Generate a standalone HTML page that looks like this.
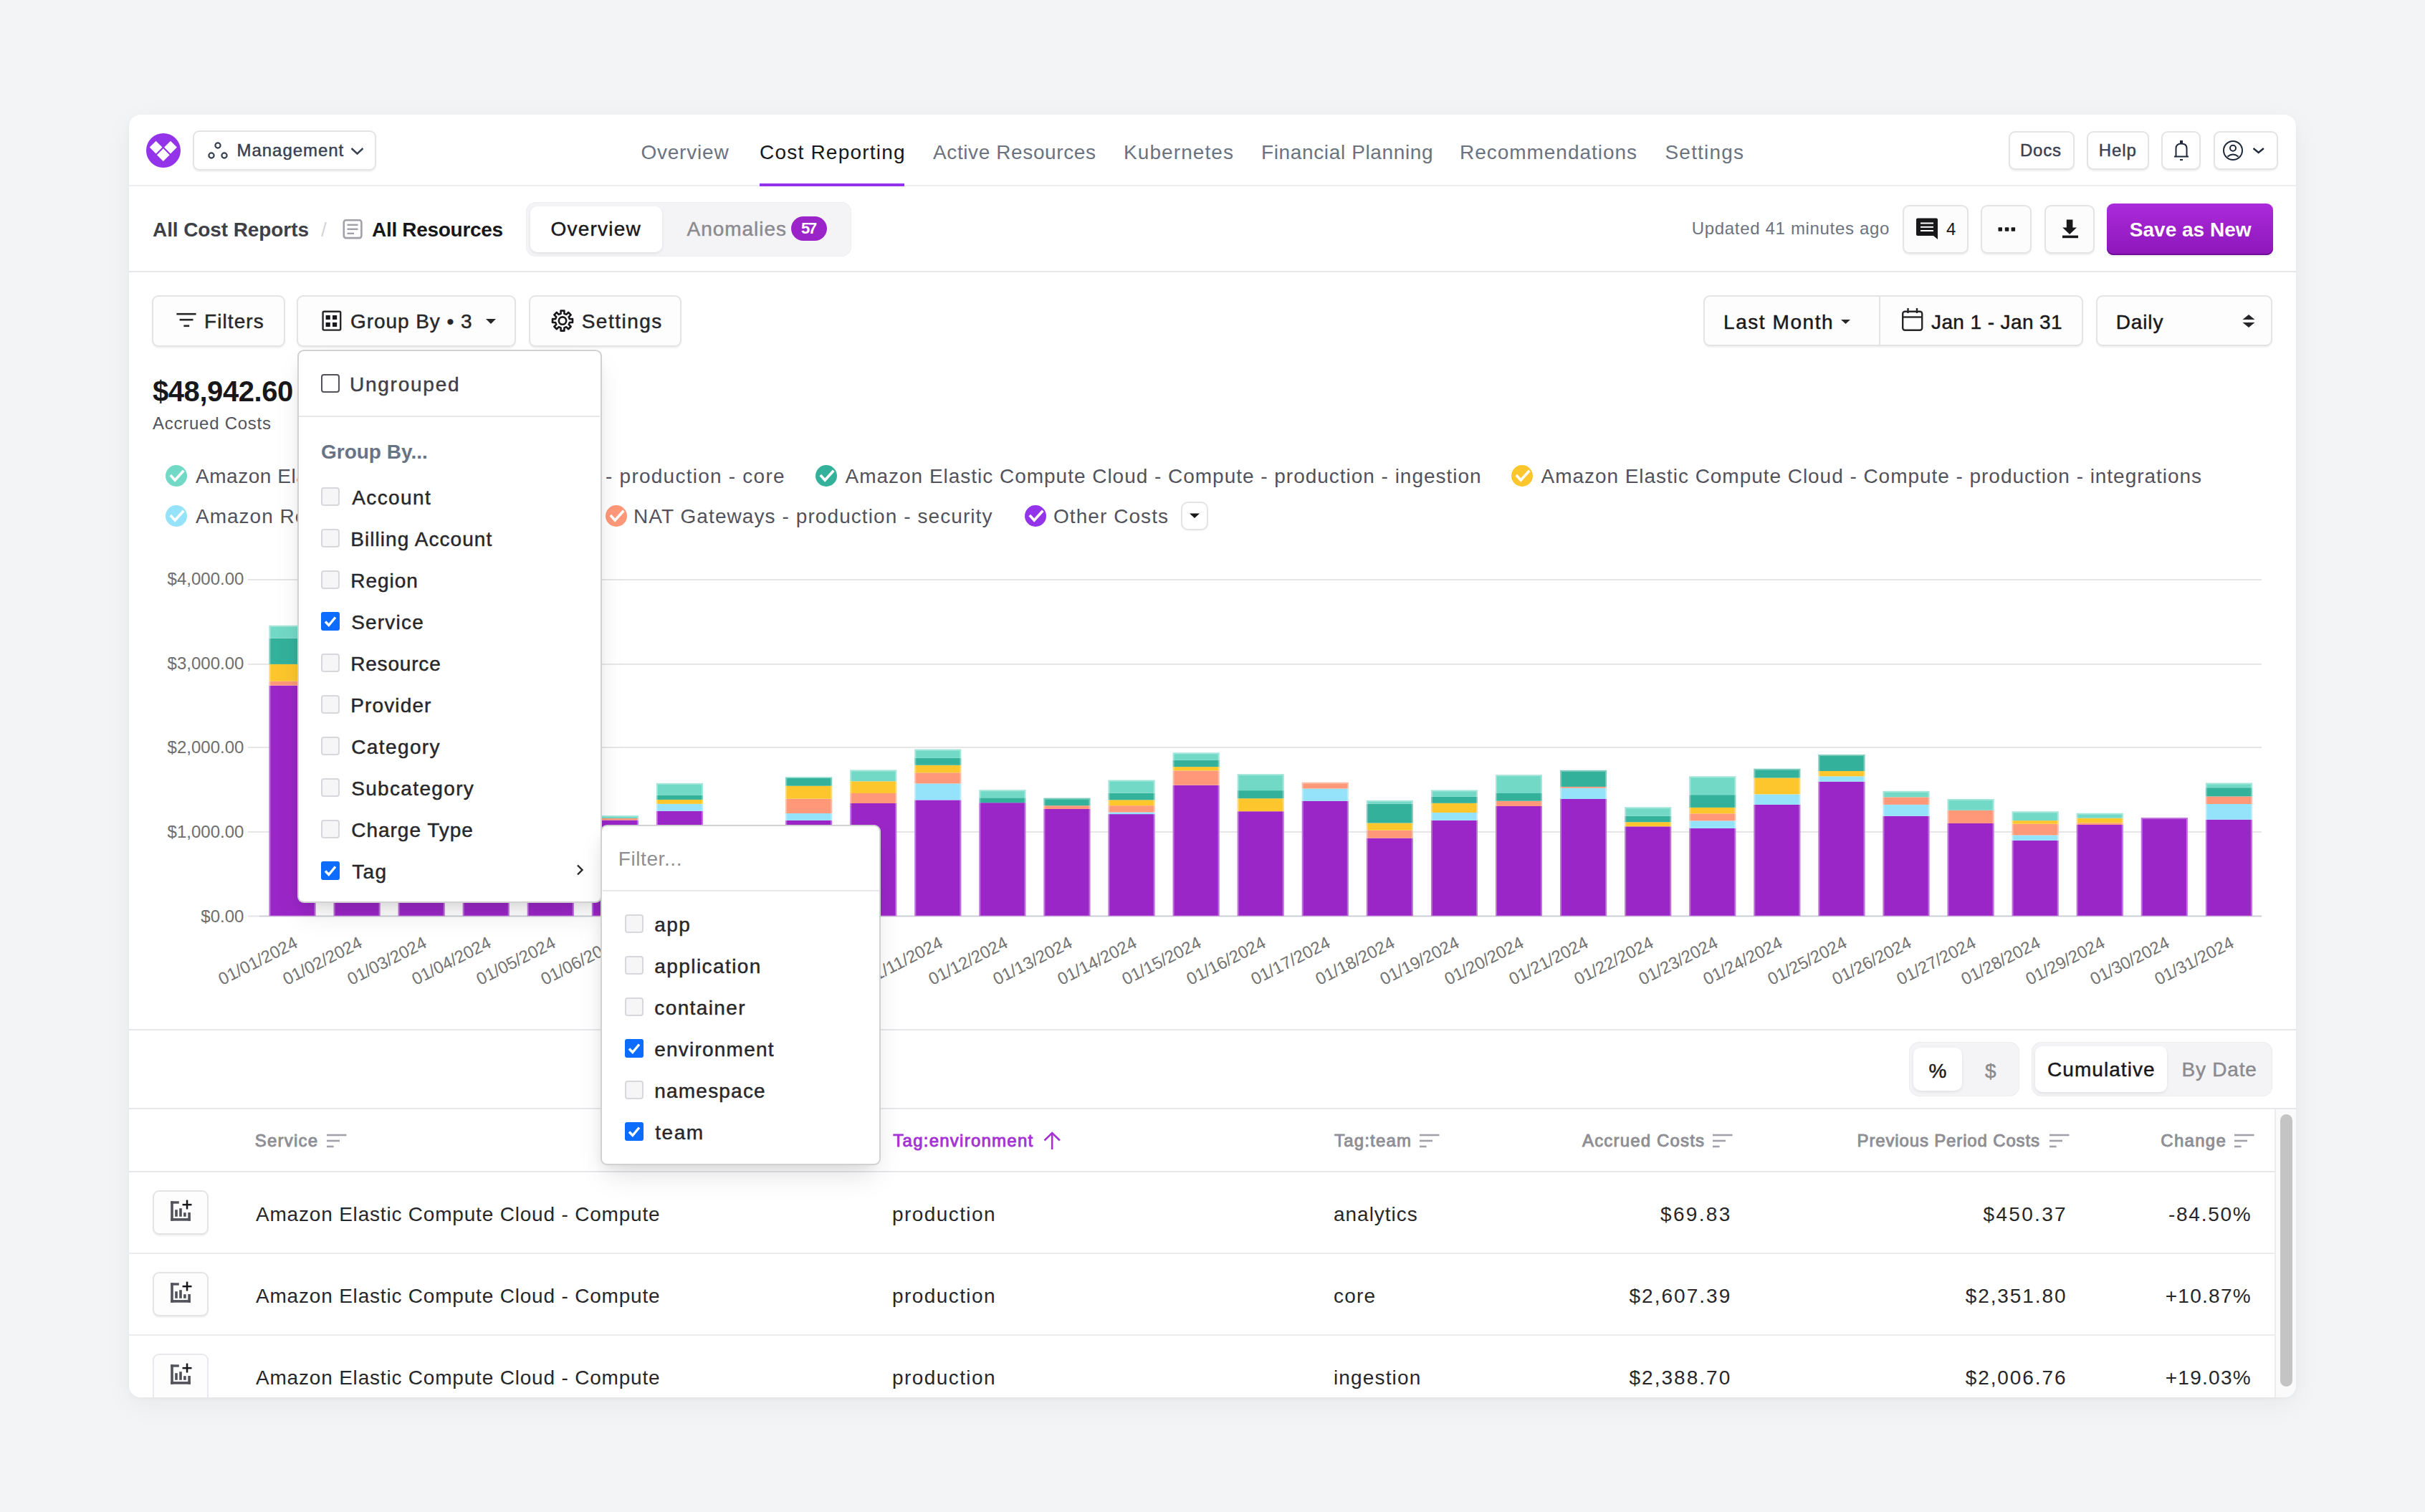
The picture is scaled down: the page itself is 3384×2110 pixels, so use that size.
<!DOCTYPE html>
<html><head><meta charset="utf-8"><title>Cost Reporting</title>
<style>
html,body{margin:0;padding:0;}
html{background:#f3f4f6;}
body{width:3384px;height:2110px;position:relative;background:#f3f4f6;font-family:'Liberation Sans', sans-serif;}

</style></head><body>
<div style="position:absolute;left:180.00px;top:160.00px;width:3024.00px;height:1790.00px;background:#fff;border-radius:16px;box-shadow:0 10px 40px rgba(0,0,0,0.05), 0 2px 6px rgba(0,0,0,0.03);"></div>
<div style="position:absolute;left:180.00px;top:258.00px;width:3024.00px;height:2.00px;background:#eceef1;"></div>
<svg style="position:absolute;left:200.00px;top:182.00px;overflow:visible;" width="56" height="56" viewBox="200 182 56 56"><circle cx="228" cy="210" r="24" fill="#9333ea"/><path d="M217.6 196.7 L226.5 205.6 L217.6 214.5 L208.7 205.6Z M238.0 196.7 L246.9 205.6 L238.0 214.5 L229.1 205.6Z M227.8 207.29999999999998 L236.70000000000002 216.2 L227.8 225.1 L218.9 216.2Z " fill="#fff"/></svg>
<div style="position:absolute;left:269.00px;top:182.00px;width:256.00px;height:56.00px;box-sizing:border-box;border:2px solid #e4e4e7;border-radius:9px;background:#fff;box-shadow:0 2px 2px rgba(24,24,27,0.06);"></div>
<svg style="position:absolute;left:285.00px;top:195.00px;overflow:visible;" width="40" height="30" viewBox="285 195 40 30"><g fill="none" stroke="#374151" stroke-width="2.2"><circle cx="304" cy="203" r="3.6"/><circle cx="295" cy="217" r="3.6"/><circle cx="313" cy="217" r="3.6"/></g></svg>
<div style="position:absolute;left:330.50px;top:197.60px;font:400 24px/24px 'Liberation Sans', sans-serif;-webkit-text-stroke:0.45px #374151;color:#374151;white-space:nowrap;letter-spacing:0.965px;">Management</div>
<svg style="position:absolute;left:486.00px;top:202.00px;overflow:visible;" width="26" height="18" viewBox="486 202 26 18"><polyline points="490.5,207 498.5,214.5 506.5,207" fill="none" stroke="#374151" stroke-width="2.4"/></svg>
<div style="position:absolute;left:894.40px;top:199.00px;font:400 28px/28px 'Liberation Sans', sans-serif;color:#6b7280;white-space:nowrap;letter-spacing:0.790px;">Overview</div>
<div style="position:absolute;left:1060.00px;top:199.00px;font:400 28px/28px 'Liberation Sans', sans-serif;color:#18181b;white-space:nowrap;letter-spacing:1.216px;">Cost Reporting</div>
<div style="position:absolute;left:1302.00px;top:199.00px;font:400 28px/28px 'Liberation Sans', sans-serif;color:#6b7280;white-space:nowrap;letter-spacing:0.609px;">Active Resources</div>
<div style="position:absolute;left:1568.00px;top:199.00px;font:400 28px/28px 'Liberation Sans', sans-serif;color:#6b7280;white-space:nowrap;letter-spacing:1.087px;">Kubernetes</div>
<div style="position:absolute;left:1760.00px;top:199.00px;font:400 28px/28px 'Liberation Sans', sans-serif;color:#6b7280;white-space:nowrap;letter-spacing:0.633px;">Financial Planning</div>
<div style="position:absolute;left:2037.00px;top:199.00px;font:400 28px/28px 'Liberation Sans', sans-serif;color:#6b7280;white-space:nowrap;letter-spacing:0.968px;">Recommendations</div>
<div style="position:absolute;left:2323.50px;top:199.00px;font:400 28px/28px 'Liberation Sans', sans-serif;color:#6b7280;white-space:nowrap;letter-spacing:1.190px;">Settings</div>
<div style="position:absolute;left:1060.00px;top:256.00px;width:202.00px;height:4.00px;background:#9333ea;"></div>
<div style="position:absolute;left:2803.00px;top:183.00px;width:92.00px;height:54.00px;box-sizing:border-box;border:2px solid #e4e4e7;border-radius:9px;background:#fff;box-shadow:0 2px 2px rgba(24,24,27,0.06);"></div>
<div style="position:absolute;left:2819.00px;top:198.00px;font:400 24px/24px 'Liberation Sans', sans-serif;-webkit-text-stroke:0.45px #374151;color:#374151;white-space:nowrap;letter-spacing:0.773px;">Docs</div>
<div style="position:absolute;left:2912.00px;top:183.00px;width:87.00px;height:54.00px;box-sizing:border-box;border:2px solid #e4e4e7;border-radius:9px;background:#fff;box-shadow:0 2px 2px rgba(24,24,27,0.06);"></div>
<div style="position:absolute;left:2928.70px;top:198.00px;font:400 24px/24px 'Liberation Sans', sans-serif;-webkit-text-stroke:0.45px #374151;color:#374151;white-space:nowrap;letter-spacing:0.929px;">Help</div>
<div style="position:absolute;left:3016.00px;top:183.00px;width:55.00px;height:54.00px;box-sizing:border-box;border:2px solid #e4e4e7;border-radius:9px;background:#fff;box-shadow:0 2px 2px rgba(24,24,27,0.06);"></div>
<svg style="position:absolute;left:3030.00px;top:192.00px;overflow:visible;" width="28" height="36" viewBox="3030 192 28 36"><g fill="none" stroke="#1e293b" stroke-width="2"><path d="M3036.5 218 V207 Q3036.5 200.5 3044 200.5 Q3051.5 200.5 3051.5 207 V218"/><line x1="3034" y1="218.5" x2="3054" y2="218.5"/></g><rect x="3042" y="196" width="4" height="4.5" fill="#1e293b"/><rect x="3042" y="222" width="4" height="2" fill="#1e293b"/></svg>
<div style="position:absolute;left:3089.00px;top:183.00px;width:90.00px;height:54.00px;box-sizing:border-box;border:2px solid #e4e4e7;border-radius:9px;background:#fff;box-shadow:0 2px 2px rgba(24,24,27,0.06);"></div>
<svg style="position:absolute;left:3098.00px;top:192.00px;overflow:visible;" width="70" height="36" viewBox="3098 192 70 36"><g fill="none" stroke="#1e293b" stroke-width="2"><circle cx="3116" cy="210" r="13"/><circle cx="3116" cy="206.7" r="4"/><path d="M3108.5 218.5 Q3116 212.5 3123.5 218.5"/><polyline points="3144.5,207 3151.7,213 3158.9,207" stroke-width="2.4"/></g></svg>
<div style="position:absolute;left:180.00px;top:378.00px;width:3024.00px;height:2.00px;background:#e5e7eb;"></div>
<div style="position:absolute;left:213.00px;top:306.50px;font:700 28px/28px 'Liberation Sans', sans-serif;color:#3f3f46;white-space:nowrap;letter-spacing:-0.092px;">All Cost Reports</div>
<div style="position:absolute;left:448.00px;top:306.50px;font:400 28px/28px 'Liberation Sans', sans-serif;color:#d4d4d8;white-space:nowrap;letter-spacing:0.000px;">/</div>
<svg style="position:absolute;left:476.00px;top:304.00px;overflow:visible;" width="32" height="32" viewBox="476 304 32 32"><rect x="479.8" y="307.3" width="24.6" height="24.8" rx="3" fill="none" stroke="#a1a1aa" stroke-width="2.6"/><g stroke="#a1a1aa" stroke-width="2.4"><line x1="484.5" y1="313.8" x2="499.5" y2="313.8"/><line x1="484.5" y1="319.8" x2="499.5" y2="319.8"/><line x1="484.5" y1="325.8" x2="494" y2="325.8"/></g></svg>
<div style="position:absolute;left:519.00px;top:306.50px;font:700 28px/28px 'Liberation Sans', sans-serif;color:#18181b;white-space:nowrap;letter-spacing:-0.306px;">All Resources</div>
<div style="position:absolute;left:734.00px;top:282.00px;width:454.00px;height:76.00px;background:#f4f4f6;border-radius:14px;box-shadow:inset 0 0 0 1px #eeeef1;"></div>
<div style="position:absolute;left:740.00px;top:288.00px;width:184.00px;height:64.00px;background:#fff;border-radius:10px;box-shadow:0 2px 4px rgba(0,0,0,0.08);"></div>
<div style="position:absolute;left:768.50px;top:306.40px;font:400 28px/28px 'Liberation Sans', sans-serif;-webkit-text-stroke:0.45px #18181b;color:#18181b;white-space:nowrap;letter-spacing:1.233px;">Overview</div>
<div style="position:absolute;left:958.50px;top:306.40px;font:400 28px/28px 'Liberation Sans', sans-serif;-webkit-text-stroke:0.45px #8a8a8f;color:#8a8a8f;white-space:nowrap;letter-spacing:0.971px;">Anomalies</div>
<div style="position:absolute;left:1104.00px;top:301.50px;width:50.00px;height:34.00px;background:#9b24c9;border-radius:17px;"></div>
<div style="position:absolute;left:1118.00px;top:308.00px;font:700 22px/22px 'Liberation Sans', sans-serif;color:#fff;white-space:nowrap;letter-spacing:-2.235px;">57</div>
<div style="position:absolute;left:2360.75px;top:307.40px;font:400 24px/24px 'Liberation Sans', sans-serif;color:#6b7280;white-space:nowrap;letter-spacing:0.671px;">Updated 41 minutes ago</div>
<div style="position:absolute;left:2655.00px;top:286.00px;width:92.00px;height:68.00px;box-sizing:border-box;border:2px solid #e4e4e7;border-radius:9px;background:#fcfcfd;box-shadow:0 2px 2px rgba(24,24,27,0.06);"></div>
<svg style="position:absolute;left:2670.00px;top:300.00px;overflow:visible;" width="40" height="40" viewBox="2670 300 40 40"><path d="M2676 304.5 H2702 Q2704 304.5 2704 306.5 V334 L2698 329 H2676 Q2674 329 2674 327 V306.5 Q2674 304.5 2676 304.5Z" fill="#18181b"/><g stroke="#fff" stroke-width="2"><line x1="2680" y1="311.5" x2="2698" y2="311.5"/><line x1="2680" y1="316.8" x2="2698" y2="316.8"/><line x1="2680" y1="322" x2="2698" y2="322"/></g></svg>
<div style="position:absolute;left:2716.00px;top:307.60px;font:400 24px/24px 'Liberation Sans', sans-serif;color:#18181b;white-space:nowrap;letter-spacing:0.000px;">4</div>
<div style="position:absolute;left:2764.00px;top:286.00px;width:71.00px;height:68.00px;box-sizing:border-box;border:2px solid #e4e4e7;border-radius:9px;background:#fcfcfd;box-shadow:0 2px 2px rgba(24,24,27,0.06);"></div>
<svg style="position:absolute;left:2785.00px;top:314.00px;overflow:visible;" width="30" height="12" viewBox="2785 314 30 12"><g fill="#18181b"><rect x="2788.5" y="317.3" width="5.5" height="5.5" rx="1"/><rect x="2797.8" y="317.3" width="5.5" height="5.5" rx="1"/><rect x="2806.6" y="317.3" width="5.5" height="5.5" rx="1"/></g></svg>
<div style="position:absolute;left:2853.00px;top:286.00px;width:70.00px;height:68.00px;box-sizing:border-box;border:2px solid #e4e4e7;border-radius:9px;background:#fcfcfd;box-shadow:0 2px 2px rgba(24,24,27,0.06);"></div>
<svg style="position:absolute;left:2874.00px;top:303.00px;overflow:visible;" width="30" height="32" viewBox="2874 303 30 32"><path d="M2883.8 306.5 H2892.4 V317.5 H2898 L2888.1 327 L2878.2 317.5 H2883.8Z" fill="#18181b"/><rect x="2878" y="328.6" width="22" height="3.6" fill="#18181b"/></svg>
<div style="position:absolute;left:2940.00px;top:284.00px;width:232.00px;height:72.00px;border-radius:9px;background:linear-gradient(#ab2bdb,#8d16b9);box-shadow:inset 0 -2px 0 #6f0e97, 0 2px 3px rgba(0,0,0,0.08);"></div>
<div style="position:absolute;left:2971.80px;top:306.70px;font:700 28px/28px 'Liberation Sans', sans-serif;color:#fff;white-space:nowrap;letter-spacing:0.011px;">Save as New</div>
<div style="position:absolute;left:212.00px;top:412.00px;width:186.00px;height:72.00px;box-sizing:border-box;border:2px solid #e4e4e7;border-radius:9px;background:#fdfdfd;box-shadow:0 2px 2px rgba(24,24,27,0.06);"></div>
<svg style="position:absolute;left:244.00px;top:434.00px;overflow:visible;" width="32" height="24" viewBox="244 434 32 24"><g stroke="#27272a" stroke-width="2.6"><line x1="246.4" y1="438.2" x2="273.6" y2="438.2"/><line x1="250.6" y1="446.2" x2="269.5" y2="446.2"/><line x1="256.4" y1="454.8" x2="264.2" y2="454.8"/></g></svg>
<div style="position:absolute;left:285.00px;top:435.00px;font:400 28px/28px 'Liberation Sans', sans-serif;-webkit-text-stroke:0.45px #27272a;color:#27272a;white-space:nowrap;letter-spacing:1.080px;">Filters</div>
<div style="position:absolute;left:414.00px;top:412.00px;width:306.00px;height:72.00px;box-sizing:border-box;border:2px solid #e4e4e7;border-radius:9px;background:#fdfdfd;box-shadow:0 2px 2px rgba(24,24,27,0.06);"></div>
<svg style="position:absolute;left:446.00px;top:431.00px;overflow:visible;" width="34" height="34" viewBox="446 431 34 34"><rect x="450.6" y="434.8" width="24.6" height="25.8" rx="1.5" fill="none" stroke="#27272a" stroke-width="2.4"/><g fill="#18181b"><rect x="454.6" y="440" width="6.2" height="6"/><rect x="464" y="440" width="6.2" height="6"/><rect x="454.6" y="450" width="6.2" height="6"/><rect x="464" y="450" width="6.2" height="6"/></g></svg>
<div style="position:absolute;left:489.00px;top:435.00px;font:400 28px/28px 'Liberation Sans', sans-serif;-webkit-text-stroke:0.45px #27272a;color:#27272a;white-space:nowrap;letter-spacing:0.942px;">Group By • 3</div>
<svg style="position:absolute;left:674.00px;top:440.00px;overflow:visible;" width="22" height="16" viewBox="674 440 22 16"><path d="M678 445 H692 L685 452Z" fill="#27272a"/></svg>
<div style="position:absolute;left:738.00px;top:412.00px;width:213.00px;height:72.00px;box-sizing:border-box;border:2px solid #e4e4e7;border-radius:9px;background:#fdfdfd;box-shadow:0 2px 2px rgba(24,24,27,0.06);"></div>
<svg style="position:absolute;left:766.00px;top:428.00px;overflow:visible;" width="40" height="40" viewBox="766 428 40 40"><path d="M782.60 437.69 L782.56 433.61 L787.44 433.61 L787.40 437.69 L790.32 438.89 L793.17 435.98 L796.62 439.43 L793.71 442.28 L794.91 445.20 L798.99 445.16 L798.99 450.04 L794.91 450.00 L793.71 452.92 L796.62 455.77 L793.17 459.22 L790.32 456.31 L787.40 457.51 L787.44 461.59 L782.56 461.59 L782.60 457.51 L779.68 456.31 L776.83 459.22 L773.38 455.77 L776.29 452.92 L775.09 450.00 L771.01 450.04 L771.01 445.16 L775.09 445.20 L776.29 442.28 L773.38 439.43 L776.83 435.98 L779.68 438.89Z" fill="none" stroke="#18181b" stroke-width="2.6" stroke-linejoin="round"/><circle cx="785" cy="447.6" r="5.2" fill="none" stroke="#18181b" stroke-width="2.6"/></svg>
<div style="position:absolute;left:811.70px;top:435.00px;font:400 28px/28px 'Liberation Sans', sans-serif;-webkit-text-stroke:0.45px #27272a;color:#27272a;white-space:nowrap;letter-spacing:1.490px;">Settings</div>
<div style="position:absolute;left:2377.00px;top:412.00px;width:530.00px;height:71.00px;box-sizing:border-box;border:2px solid #e4e4e7;border-radius:9px;background:#fdfdfd;box-shadow:0 2px 2px rgba(24,24,27,0.06);"></div>
<div style="position:absolute;left:2622.00px;top:414.00px;width:2.00px;height:67.00px;background:#e4e4e7;"></div>
<div style="position:absolute;left:2405.00px;top:435.50px;font:400 28px/28px 'Liberation Sans', sans-serif;-webkit-text-stroke:0.45px #18181b;color:#18181b;white-space:nowrap;letter-spacing:1.561px;">Last Month</div>
<svg style="position:absolute;left:2565.00px;top:440.00px;overflow:visible;" width="22" height="16" viewBox="2565 440 22 16"><path d="M2569 446 H2582 L2575.5 452Z" fill="#27272a"/></svg>
<svg style="position:absolute;left:2650.00px;top:426.00px;overflow:visible;" width="38" height="40" viewBox="2650 426 38 40"><rect x="2655.2" y="434.8" width="27" height="26" rx="3" fill="none" stroke="#27272a" stroke-width="2.4"/><line x1="2655" y1="442.5" x2="2682.5" y2="442.5" stroke="#27272a" stroke-width="2.4"/><g stroke="#27272a" stroke-width="2.4"><line x1="2662.5" y1="430" x2="2662.5" y2="437"/><line x1="2675" y1="430" x2="2675" y2="437"/></g></svg>
<div style="position:absolute;left:2695.00px;top:435.50px;font:400 28px/28px 'Liberation Sans', sans-serif;-webkit-text-stroke:0.45px #18181b;color:#18181b;white-space:nowrap;letter-spacing:0.394px;">Jan 1 - Jan 31</div>
<div style="position:absolute;left:2925.00px;top:412.00px;width:246.00px;height:71.00px;box-sizing:border-box;border:2px solid #e4e4e7;border-radius:9px;background:#fdfdfd;box-shadow:0 2px 2px rgba(24,24,27,0.06);"></div>
<div style="position:absolute;left:2952.70px;top:435.50px;font:400 28px/28px 'Liberation Sans', sans-serif;-webkit-text-stroke:0.45px #18181b;color:#18181b;white-space:nowrap;letter-spacing:0.891px;">Daily</div>
<svg style="position:absolute;left:3125.00px;top:436.00px;overflow:visible;" width="26" height="24" viewBox="3125 436 26 24"><path d="M3129.5 446 L3138 439 L3146.5 446Z M3129.5 450 L3138 457 L3146.5 450Z" fill="#27272a"/></svg>
<div style="position:absolute;left:213.00px;top:526.40px;font:700 40px/40px 'Liberation Sans', sans-serif;color:#18181b;white-space:nowrap;letter-spacing:-0.439px;">$48,942.60</div>
<div style="position:absolute;left:213.00px;top:579.00px;font:400 24px/24px 'Liberation Sans', sans-serif;color:#52525b;white-space:nowrap;letter-spacing:0.745px;">Accrued Costs</div>
<svg style="position:absolute;left:230.00px;top:648.00px;overflow:visible;" width="32" height="32" viewBox="230 648 32 32"><circle cx="246" cy="664" r="15" fill="#72d9c6"/><polyline points="237.8,663 244.2,670 256.3,656.7" fill="none" stroke="#fff" stroke-width="3.6"/></svg>
<div style="position:absolute;left:273.00px;top:650.70px;font:400 28px/28px 'Liberation Sans', sans-serif;color:#52525b;white-space:nowrap;letter-spacing:0.535px;">Amazon Elastic Compute Cloud - Compute</div>
<div style="position:absolute;left:845.00px;top:650.70px;font:400 28px/28px 'Liberation Sans', sans-serif;color:#52525b;white-space:nowrap;letter-spacing:1.242px;">- production - core</div>
<svg style="position:absolute;left:1137.30px;top:648.00px;overflow:visible;" width="32" height="32" viewBox="1137.3 648 32 32"><circle cx="1153.3" cy="664" r="15" fill="#33b19b"/><polyline points="1145.1,663 1151.5,670 1163.6,656.7" fill="none" stroke="#fff" stroke-width="3.6"/></svg>
<div style="position:absolute;left:1179.60px;top:650.70px;font:400 28px/28px 'Liberation Sans', sans-serif;color:#52525b;white-space:nowrap;letter-spacing:0.977px;">Amazon Elastic Compute Cloud - Compute - production - ingestion</div>
<svg style="position:absolute;left:2108.00px;top:648.00px;overflow:visible;" width="32" height="32" viewBox="2108 648 32 32"><circle cx="2124" cy="664" r="15" fill="#fcc62c"/><polyline points="2115.8,663 2122.2,670 2134.3,656.7" fill="none" stroke="#fff" stroke-width="3.6"/></svg>
<div style="position:absolute;left:2150.50px;top:650.70px;font:400 28px/28px 'Liberation Sans', sans-serif;color:#52525b;white-space:nowrap;letter-spacing:0.960px;">Amazon Elastic Compute Cloud - Compute - production - integrations</div>
<svg style="position:absolute;left:230.00px;top:703.50px;overflow:visible;" width="32" height="32" viewBox="230 703.5 32 32"><circle cx="246" cy="719.5" r="15" fill="#95e3fa"/><polyline points="237.8,718.5 244.2,725.5 256.3,712.2" fill="none" stroke="#fff" stroke-width="3.6"/></svg>
<div style="position:absolute;left:273.00px;top:706.50px;font:400 28px/28px 'Liberation Sans', sans-serif;color:#52525b;white-space:nowrap;letter-spacing:1.000px;">Amazon Redshift - production - data</div>
<svg style="position:absolute;left:843.50px;top:703.50px;overflow:visible;" width="32" height="32" viewBox="843.5 703.5 32 32"><circle cx="859.5" cy="719.5" r="15" fill="#fe9879"/><polyline points="851.3,718.5 857.7,725.5 869.8,712.2" fill="none" stroke="#fff" stroke-width="3.6"/></svg>
<div style="position:absolute;left:884.00px;top:706.50px;font:400 28px/28px 'Liberation Sans', sans-serif;color:#52525b;white-space:nowrap;letter-spacing:1.080px;">NAT Gateways - production - security</div>
<svg style="position:absolute;left:1428.50px;top:703.50px;overflow:visible;" width="32" height="32" viewBox="1428.5 703.5 32 32"><circle cx="1444.5" cy="719.5" r="15" fill="#9333ea"/><polyline points="1436.3,718.5 1442.7,725.5 1454.8,712.2" fill="none" stroke="#fff" stroke-width="3.6"/></svg>
<div style="position:absolute;left:1470.00px;top:706.50px;font:400 28px/28px 'Liberation Sans', sans-serif;color:#52525b;white-space:nowrap;letter-spacing:1.062px;">Other Costs</div>
<div style="position:absolute;left:1648.00px;top:700.00px;width:38.00px;height:40.00px;box-sizing:border-box;border:2px solid #e4e4e7;border-radius:10px;background:#fff;box-shadow:0 1px 2px rgba(0,0,0,0.05);"></div>
<svg style="position:absolute;left:1658.00px;top:712.00px;overflow:visible;" width="20" height="14" viewBox="1658 712 20 14"><path d="M1660 716.5 H1674 L1667 723Z" fill="#18181b"/></svg>
<svg style="position:absolute;left:0;top:0" width="3384" height="2110" viewBox="0 0 3384 2110"><rect x="346" y="808" width="2810" height="2" fill="#e6e6e6"/><rect x="346" y="925.9" width="2810" height="2" fill="#e6e6e6"/><rect x="346" y="1042" width="2810" height="2" fill="#e6e6e6"/><rect x="346" y="1160" width="2810" height="2" fill="#e6e6e6"/><rect x="346" y="1277.5" width="16" height="2" fill="#e6e6e6"/><rect x="362" y="1277.5" width="2794" height="2" fill="#ccd0d6"/><rect x="375.50" y="956.60" width="65" height="321.90" fill="#9b26c8"/><rect x="375.50" y="950.70" width="65" height="5.90" fill="#fe9879"/><rect x="375.50" y="926.90" width="65" height="23.80" fill="#fcc62c"/><rect x="375.50" y="890.70" width="65" height="36.20" fill="#33b19b"/><rect x="375.50" y="872.80" width="65" height="17.90" fill="#72d9c6"/><rect x="376.50" y="873.80" width="63" height="404.70" fill="none" stroke="rgba(255,255,255,0.35)" stroke-width="2"/><rect x="465.58" y="1100.00" width="65" height="178.50" fill="#9b26c8"/><rect x="466.58" y="1101.00" width="63" height="177.50" fill="none" stroke="rgba(255,255,255,0.35)" stroke-width="2"/><rect x="555.66" y="1120.00" width="65" height="158.50" fill="#9b26c8"/><rect x="556.66" y="1121.00" width="63" height="157.50" fill="none" stroke="rgba(255,255,255,0.35)" stroke-width="2"/><rect x="645.74" y="1110.00" width="65" height="168.50" fill="#9b26c8"/><rect x="646.74" y="1111.00" width="63" height="167.50" fill="none" stroke="rgba(255,255,255,0.35)" stroke-width="2"/><rect x="735.82" y="1130.00" width="65" height="148.50" fill="#9b26c8"/><rect x="736.82" y="1131.00" width="63" height="147.50" fill="none" stroke="rgba(255,255,255,0.35)" stroke-width="2"/><rect x="825.90" y="1144.50" width="65" height="134.00" fill="#9b26c8"/><rect x="825.90" y="1142.00" width="65" height="2.50" fill="#fe9879"/><rect x="825.90" y="1138.00" width="65" height="4.00" fill="#72d9c6"/><rect x="826.90" y="1139.00" width="63" height="139.50" fill="none" stroke="rgba(255,255,255,0.35)" stroke-width="2"/><rect x="915.98" y="1131.70" width="65" height="146.80" fill="#9b26c8"/><rect x="915.98" y="1121.80" width="65" height="9.90" fill="#95e3fa"/><rect x="915.98" y="1115.90" width="65" height="5.90" fill="#fcc62c"/><rect x="915.98" y="1109.50" width="65" height="6.40" fill="#33b19b"/><rect x="915.98" y="1092.90" width="65" height="16.60" fill="#72d9c6"/><rect x="916.98" y="1093.90" width="63" height="184.60" fill="none" stroke="rgba(255,255,255,0.35)" stroke-width="2"/><rect x="1006.06" y="1170.00" width="65" height="108.50" fill="#9b26c8"/><rect x="1007.06" y="1171.00" width="63" height="107.50" fill="none" stroke="rgba(255,255,255,0.35)" stroke-width="2"/><rect x="1096.14" y="1144.80" width="65" height="133.70" fill="#9b26c8"/><rect x="1096.14" y="1135.00" width="65" height="9.80" fill="#95e3fa"/><rect x="1096.14" y="1114.60" width="65" height="20.40" fill="#fe9879"/><rect x="1096.14" y="1096.70" width="65" height="17.90" fill="#fcc62c"/><rect x="1096.14" y="1085.20" width="65" height="11.50" fill="#33b19b"/><rect x="1096.14" y="1084.00" width="65" height="1.20" fill="#72d9c6"/><rect x="1097.14" y="1085.00" width="63" height="193.50" fill="none" stroke="rgba(255,255,255,0.35)" stroke-width="2"/><rect x="1186.22" y="1121.00" width="65" height="157.50" fill="#9b26c8"/><rect x="1186.22" y="1107.00" width="65" height="14.00" fill="#fe9879"/><rect x="1186.22" y="1090.30" width="65" height="16.70" fill="#fcc62c"/><rect x="1186.22" y="1074.50" width="65" height="15.80" fill="#72d9c6"/><rect x="1187.22" y="1075.50" width="63" height="203.00" fill="none" stroke="rgba(255,255,255,0.35)" stroke-width="2"/><rect x="1276.30" y="1116.40" width="65" height="162.10" fill="#9b26c8"/><rect x="1276.30" y="1093.40" width="65" height="23.00" fill="#95e3fa"/><rect x="1276.30" y="1078.30" width="65" height="15.10" fill="#fe9879"/><rect x="1276.30" y="1067.80" width="65" height="10.50" fill="#fcc62c"/><rect x="1276.30" y="1057.80" width="65" height="10.00" fill="#33b19b"/><rect x="1276.30" y="1045.60" width="65" height="12.20" fill="#72d9c6"/><rect x="1277.30" y="1046.60" width="63" height="231.90" fill="none" stroke="rgba(255,255,255,0.35)" stroke-width="2"/><rect x="1366.38" y="1120.20" width="65" height="158.30" fill="#9b26c8"/><rect x="1366.38" y="1113.30" width="65" height="6.90" fill="#33b19b"/><rect x="1366.38" y="1102.30" width="65" height="11.00" fill="#72d9c6"/><rect x="1367.38" y="1103.30" width="63" height="175.20" fill="none" stroke="rgba(255,255,255,0.35)" stroke-width="2"/><rect x="1456.46" y="1129.00" width="65" height="149.50" fill="#9b26c8"/><rect x="1456.46" y="1124.20" width="65" height="4.80" fill="#fe9879"/><rect x="1456.46" y="1113.70" width="65" height="10.50" fill="#33b19b"/><rect x="1457.46" y="1114.70" width="63" height="163.80" fill="none" stroke="rgba(255,255,255,0.35)" stroke-width="2"/><rect x="1546.54" y="1136.10" width="65" height="142.40" fill="#9b26c8"/><rect x="1546.54" y="1133.50" width="65" height="2.60" fill="#95e3fa"/><rect x="1546.54" y="1124.20" width="65" height="9.30" fill="#fe9879"/><rect x="1546.54" y="1116.30" width="65" height="7.90" fill="#fcc62c"/><rect x="1546.54" y="1106.60" width="65" height="9.70" fill="#33b19b"/><rect x="1546.54" y="1088.60" width="65" height="18.00" fill="#72d9c6"/><rect x="1547.54" y="1089.60" width="63" height="188.90" fill="none" stroke="rgba(255,255,255,0.35)" stroke-width="2"/><rect x="1636.62" y="1095.70" width="65" height="182.80" fill="#9b26c8"/><rect x="1636.62" y="1075.40" width="65" height="20.30" fill="#fe9879"/><rect x="1636.62" y="1070.10" width="65" height="5.30" fill="#fcc62c"/><rect x="1636.62" y="1060.90" width="65" height="9.20" fill="#33b19b"/><rect x="1636.62" y="1050.40" width="65" height="10.50" fill="#72d9c6"/><rect x="1637.62" y="1051.40" width="63" height="227.10" fill="none" stroke="rgba(255,255,255,0.35)" stroke-width="2"/><rect x="1726.70" y="1132.20" width="65" height="146.30" fill="#9b26c8"/><rect x="1726.70" y="1114.20" width="65" height="18.00" fill="#fcc62c"/><rect x="1726.70" y="1103.10" width="65" height="11.10" fill="#33b19b"/><rect x="1726.70" y="1080.20" width="65" height="22.90" fill="#72d9c6"/><rect x="1727.70" y="1081.20" width="63" height="197.30" fill="none" stroke="rgba(255,255,255,0.35)" stroke-width="2"/><rect x="1816.78" y="1117.70" width="65" height="160.80" fill="#9b26c8"/><rect x="1816.78" y="1100.50" width="65" height="17.20" fill="#95e3fa"/><rect x="1816.78" y="1091.80" width="65" height="8.70" fill="#fe9879"/><rect x="1817.78" y="1092.80" width="63" height="185.70" fill="none" stroke="rgba(255,255,255,0.35)" stroke-width="2"/><rect x="1906.86" y="1169.60" width="65" height="108.90" fill="#9b26c8"/><rect x="1906.86" y="1158.60" width="65" height="11.00" fill="#fe9879"/><rect x="1906.86" y="1148.50" width="65" height="10.10" fill="#fcc62c"/><rect x="1906.86" y="1121.60" width="65" height="26.90" fill="#33b19b"/><rect x="1906.86" y="1116.90" width="65" height="4.70" fill="#72d9c6"/><rect x="1907.86" y="1117.90" width="63" height="160.60" fill="none" stroke="rgba(255,255,255,0.35)" stroke-width="2"/><rect x="1996.94" y="1144.80" width="65" height="133.70" fill="#9b26c8"/><rect x="1996.94" y="1134.00" width="65" height="10.80" fill="#95e3fa"/><rect x="1996.94" y="1120.80" width="65" height="13.20" fill="#fcc62c"/><rect x="1996.94" y="1111.80" width="65" height="9.00" fill="#33b19b"/><rect x="1996.94" y="1102.60" width="65" height="9.20" fill="#72d9c6"/><rect x="1997.94" y="1103.60" width="63" height="174.90" fill="none" stroke="rgba(255,255,255,0.35)" stroke-width="2"/><rect x="2087.02" y="1125.00" width="65" height="153.50" fill="#9b26c8"/><rect x="2087.02" y="1117.70" width="65" height="7.30" fill="#fe9879"/><rect x="2087.02" y="1107.00" width="65" height="10.70" fill="#33b19b"/><rect x="2087.02" y="1081.20" width="65" height="25.80" fill="#72d9c6"/><rect x="2088.02" y="1082.20" width="63" height="196.30" fill="none" stroke="rgba(255,255,255,0.35)" stroke-width="2"/><rect x="2177.10" y="1115.00" width="65" height="163.50" fill="#9b26c8"/><rect x="2177.10" y="1099.70" width="65" height="15.30" fill="#95e3fa"/><rect x="2177.10" y="1097.90" width="65" height="1.80" fill="#fe9879"/><rect x="2177.10" y="1074.90" width="65" height="23.00" fill="#33b19b"/><rect x="2178.10" y="1075.90" width="63" height="202.60" fill="none" stroke="rgba(255,255,255,0.35)" stroke-width="2"/><rect x="2267.18" y="1153.30" width="65" height="125.20" fill="#9b26c8"/><rect x="2267.18" y="1147.20" width="65" height="6.10" fill="#fcc62c"/><rect x="2267.18" y="1138.80" width="65" height="8.40" fill="#33b19b"/><rect x="2267.18" y="1126.40" width="65" height="12.40" fill="#72d9c6"/><rect x="2268.18" y="1127.40" width="63" height="151.10" fill="none" stroke="rgba(255,255,255,0.35)" stroke-width="2"/><rect x="2357.26" y="1155.90" width="65" height="122.60" fill="#9b26c8"/><rect x="2357.26" y="1145.40" width="65" height="10.50" fill="#95e3fa"/><rect x="2357.26" y="1135.30" width="65" height="10.10" fill="#fe9879"/><rect x="2357.26" y="1126.90" width="65" height="8.40" fill="#fcc62c"/><rect x="2357.26" y="1109.20" width="65" height="17.70" fill="#33b19b"/><rect x="2357.26" y="1083.30" width="65" height="25.90" fill="#72d9c6"/><rect x="2358.26" y="1084.30" width="63" height="194.20" fill="none" stroke="rgba(255,255,255,0.35)" stroke-width="2"/><rect x="2447.34" y="1122.90" width="65" height="155.60" fill="#9b26c8"/><rect x="2447.34" y="1108.40" width="65" height="14.50" fill="#95e3fa"/><rect x="2447.34" y="1085.50" width="65" height="22.90" fill="#fcc62c"/><rect x="2447.34" y="1072.80" width="65" height="12.70" fill="#33b19b"/><rect x="2448.34" y="1073.80" width="63" height="204.70" fill="none" stroke="rgba(255,255,255,0.35)" stroke-width="2"/><rect x="2537.42" y="1090.70" width="65" height="187.80" fill="#9b26c8"/><rect x="2537.42" y="1083.30" width="65" height="7.40" fill="#95e3fa"/><rect x="2537.42" y="1076.00" width="65" height="7.30" fill="#fcc62c"/><rect x="2537.42" y="1053.00" width="65" height="23.00" fill="#33b19b"/><rect x="2538.42" y="1054.00" width="63" height="224.50" fill="none" stroke="rgba(255,255,255,0.35)" stroke-width="2"/><rect x="2627.50" y="1138.80" width="65" height="139.70" fill="#9b26c8"/><rect x="2627.50" y="1122.90" width="65" height="15.90" fill="#95e3fa"/><rect x="2627.50" y="1112.40" width="65" height="10.50" fill="#fe9879"/><rect x="2627.50" y="1103.90" width="65" height="8.50" fill="#72d9c6"/><rect x="2628.50" y="1104.90" width="63" height="173.60" fill="none" stroke="rgba(255,255,255,0.35)" stroke-width="2"/><rect x="2717.58" y="1149.00" width="65" height="129.50" fill="#9b26c8"/><rect x="2717.58" y="1130.80" width="65" height="18.20" fill="#fe9879"/><rect x="2717.58" y="1115.00" width="65" height="15.80" fill="#72d9c6"/><rect x="2718.58" y="1116.00" width="63" height="162.50" fill="none" stroke="rgba(255,255,255,0.35)" stroke-width="2"/><rect x="2807.66" y="1172.80" width="65" height="105.70" fill="#9b26c8"/><rect x="2807.66" y="1165.50" width="65" height="7.30" fill="#95e3fa"/><rect x="2807.66" y="1149.70" width="65" height="15.80" fill="#fe9879"/><rect x="2807.66" y="1145.10" width="65" height="4.60" fill="#fcc62c"/><rect x="2807.66" y="1132.40" width="65" height="12.70" fill="#72d9c6"/><rect x="2808.66" y="1133.40" width="63" height="145.10" fill="none" stroke="rgba(255,255,255,0.35)" stroke-width="2"/><rect x="2897.74" y="1151.00" width="65" height="127.50" fill="#9b26c8"/><rect x="2897.74" y="1148.30" width="65" height="2.70" fill="#fe9879"/><rect x="2897.74" y="1141.70" width="65" height="6.60" fill="#fcc62c"/><rect x="2897.74" y="1134.80" width="65" height="6.90" fill="#72d9c6"/><rect x="2898.74" y="1135.80" width="63" height="142.70" fill="none" stroke="rgba(255,255,255,0.35)" stroke-width="2"/><rect x="2987.82" y="1141.10" width="65" height="137.40" fill="#9b26c8"/><rect x="2988.82" y="1142.10" width="63" height="136.40" fill="none" stroke="rgba(255,255,255,0.35)" stroke-width="2"/><rect x="3077.90" y="1143.70" width="65" height="134.80" fill="#9b26c8"/><rect x="3077.90" y="1122.00" width="65" height="21.70" fill="#95e3fa"/><rect x="3077.90" y="1111.40" width="65" height="10.60" fill="#fe9879"/><rect x="3077.90" y="1099.20" width="65" height="12.20" fill="#33b19b"/><rect x="3077.90" y="1092.60" width="65" height="6.60" fill="#72d9c6"/><rect x="3078.90" y="1093.60" width="63" height="184.90" fill="none" stroke="rgba(255,255,255,0.35)" stroke-width="2"/></svg>
<div style="position:absolute;left:233.58px;top:796.00px;font:400 24px/24px 'Liberation Sans', sans-serif;color:#6e6e6e;white-space:nowrap;letter-spacing:0.000px;">$4,000.00</div>
<div style="position:absolute;left:233.58px;top:913.90px;font:400 24px/24px 'Liberation Sans', sans-serif;color:#6e6e6e;white-space:nowrap;letter-spacing:0.000px;">$3,000.00</div>
<div style="position:absolute;left:233.58px;top:1031.40px;font:400 24px/24px 'Liberation Sans', sans-serif;color:#6e6e6e;white-space:nowrap;letter-spacing:0.000px;">$2,000.00</div>
<div style="position:absolute;left:233.58px;top:1149.00px;font:400 24px/24px 'Liberation Sans', sans-serif;color:#6e6e6e;white-space:nowrap;letter-spacing:0.000px;">$1,000.00</div>
<div style="position:absolute;left:280.29px;top:1267.10px;font:400 24px/24px 'Liberation Sans', sans-serif;color:#6e6e6e;white-space:nowrap;letter-spacing:0.000px;">$0.00</div>
<div style="position:absolute;left:296.83px;top:1301.00px;font:400 24px/24px 'Liberation Sans', sans-serif;color:#737373;white-space:nowrap;letter-spacing:0.000px;transform-origin:119.77px 20px;transform:rotate(-27deg);">01/01/2024</div>
<div style="position:absolute;left:386.91px;top:1301.00px;font:400 24px/24px 'Liberation Sans', sans-serif;color:#737373;white-space:nowrap;letter-spacing:0.000px;transform-origin:119.77px 20px;transform:rotate(-27deg);">01/02/2024</div>
<div style="position:absolute;left:476.99px;top:1301.00px;font:400 24px/24px 'Liberation Sans', sans-serif;color:#737373;white-space:nowrap;letter-spacing:0.000px;transform-origin:119.77px 20px;transform:rotate(-27deg);">01/03/2024</div>
<div style="position:absolute;left:567.07px;top:1301.00px;font:400 24px/24px 'Liberation Sans', sans-serif;color:#737373;white-space:nowrap;letter-spacing:0.000px;transform-origin:119.77px 20px;transform:rotate(-27deg);">01/04/2024</div>
<div style="position:absolute;left:657.15px;top:1301.00px;font:400 24px/24px 'Liberation Sans', sans-serif;color:#737373;white-space:nowrap;letter-spacing:0.000px;transform-origin:119.77px 20px;transform:rotate(-27deg);">01/05/2024</div>
<div style="position:absolute;left:747.23px;top:1301.00px;font:400 24px/24px 'Liberation Sans', sans-serif;color:#737373;white-space:nowrap;letter-spacing:0.000px;transform-origin:119.77px 20px;transform:rotate(-27deg);">01/06/2024</div>
<div style="position:absolute;left:837.31px;top:1301.00px;font:400 24px/24px 'Liberation Sans', sans-serif;color:#737373;white-space:nowrap;letter-spacing:0.000px;transform-origin:119.77px 20px;transform:rotate(-27deg);">01/07/2024</div>
<div style="position:absolute;left:927.39px;top:1301.00px;font:400 24px/24px 'Liberation Sans', sans-serif;color:#737373;white-space:nowrap;letter-spacing:0.000px;transform-origin:119.77px 20px;transform:rotate(-27deg);">01/08/2024</div>
<div style="position:absolute;left:1017.47px;top:1301.00px;font:400 24px/24px 'Liberation Sans', sans-serif;color:#737373;white-space:nowrap;letter-spacing:0.000px;transform-origin:119.77px 20px;transform:rotate(-27deg);">01/09/2024</div>
<div style="position:absolute;left:1107.55px;top:1301.00px;font:400 24px/24px 'Liberation Sans', sans-serif;color:#737373;white-space:nowrap;letter-spacing:0.000px;transform-origin:119.77px 20px;transform:rotate(-27deg);">01/10/2024</div>
<div style="position:absolute;left:1199.41px;top:1301.00px;font:400 24px/24px 'Liberation Sans', sans-serif;color:#737373;white-space:nowrap;letter-spacing:0.000px;transform-origin:117.99px 20px;transform:rotate(-27deg);">01/11/2024</div>
<div style="position:absolute;left:1287.71px;top:1301.00px;font:400 24px/24px 'Liberation Sans', sans-serif;color:#737373;white-space:nowrap;letter-spacing:0.000px;transform-origin:119.77px 20px;transform:rotate(-27deg);">01/12/2024</div>
<div style="position:absolute;left:1377.79px;top:1301.00px;font:400 24px/24px 'Liberation Sans', sans-serif;color:#737373;white-space:nowrap;letter-spacing:0.000px;transform-origin:119.77px 20px;transform:rotate(-27deg);">01/13/2024</div>
<div style="position:absolute;left:1467.87px;top:1301.00px;font:400 24px/24px 'Liberation Sans', sans-serif;color:#737373;white-space:nowrap;letter-spacing:0.000px;transform-origin:119.77px 20px;transform:rotate(-27deg);">01/14/2024</div>
<div style="position:absolute;left:1557.95px;top:1301.00px;font:400 24px/24px 'Liberation Sans', sans-serif;color:#737373;white-space:nowrap;letter-spacing:0.000px;transform-origin:119.77px 20px;transform:rotate(-27deg);">01/15/2024</div>
<div style="position:absolute;left:1648.03px;top:1301.00px;font:400 24px/24px 'Liberation Sans', sans-serif;color:#737373;white-space:nowrap;letter-spacing:0.000px;transform-origin:119.77px 20px;transform:rotate(-27deg);">01/16/2024</div>
<div style="position:absolute;left:1738.11px;top:1301.00px;font:400 24px/24px 'Liberation Sans', sans-serif;color:#737373;white-space:nowrap;letter-spacing:0.000px;transform-origin:119.77px 20px;transform:rotate(-27deg);">01/17/2024</div>
<div style="position:absolute;left:1828.19px;top:1301.00px;font:400 24px/24px 'Liberation Sans', sans-serif;color:#737373;white-space:nowrap;letter-spacing:0.000px;transform-origin:119.77px 20px;transform:rotate(-27deg);">01/18/2024</div>
<div style="position:absolute;left:1918.27px;top:1301.00px;font:400 24px/24px 'Liberation Sans', sans-serif;color:#737373;white-space:nowrap;letter-spacing:0.000px;transform-origin:119.77px 20px;transform:rotate(-27deg);">01/19/2024</div>
<div style="position:absolute;left:2008.35px;top:1301.00px;font:400 24px/24px 'Liberation Sans', sans-serif;color:#737373;white-space:nowrap;letter-spacing:0.000px;transform-origin:119.77px 20px;transform:rotate(-27deg);">01/20/2024</div>
<div style="position:absolute;left:2098.43px;top:1301.00px;font:400 24px/24px 'Liberation Sans', sans-serif;color:#737373;white-space:nowrap;letter-spacing:0.000px;transform-origin:119.77px 20px;transform:rotate(-27deg);">01/21/2024</div>
<div style="position:absolute;left:2188.51px;top:1301.00px;font:400 24px/24px 'Liberation Sans', sans-serif;color:#737373;white-space:nowrap;letter-spacing:0.000px;transform-origin:119.77px 20px;transform:rotate(-27deg);">01/22/2024</div>
<div style="position:absolute;left:2278.59px;top:1301.00px;font:400 24px/24px 'Liberation Sans', sans-serif;color:#737373;white-space:nowrap;letter-spacing:0.000px;transform-origin:119.77px 20px;transform:rotate(-27deg);">01/23/2024</div>
<div style="position:absolute;left:2368.67px;top:1301.00px;font:400 24px/24px 'Liberation Sans', sans-serif;color:#737373;white-space:nowrap;letter-spacing:0.000px;transform-origin:119.77px 20px;transform:rotate(-27deg);">01/24/2024</div>
<div style="position:absolute;left:2458.75px;top:1301.00px;font:400 24px/24px 'Liberation Sans', sans-serif;color:#737373;white-space:nowrap;letter-spacing:0.000px;transform-origin:119.77px 20px;transform:rotate(-27deg);">01/25/2024</div>
<div style="position:absolute;left:2548.83px;top:1301.00px;font:400 24px/24px 'Liberation Sans', sans-serif;color:#737373;white-space:nowrap;letter-spacing:0.000px;transform-origin:119.77px 20px;transform:rotate(-27deg);">01/26/2024</div>
<div style="position:absolute;left:2638.91px;top:1301.00px;font:400 24px/24px 'Liberation Sans', sans-serif;color:#737373;white-space:nowrap;letter-spacing:0.000px;transform-origin:119.77px 20px;transform:rotate(-27deg);">01/27/2024</div>
<div style="position:absolute;left:2728.99px;top:1301.00px;font:400 24px/24px 'Liberation Sans', sans-serif;color:#737373;white-space:nowrap;letter-spacing:0.000px;transform-origin:119.77px 20px;transform:rotate(-27deg);">01/28/2024</div>
<div style="position:absolute;left:2819.07px;top:1301.00px;font:400 24px/24px 'Liberation Sans', sans-serif;color:#737373;white-space:nowrap;letter-spacing:0.000px;transform-origin:119.77px 20px;transform:rotate(-27deg);">01/29/2024</div>
<div style="position:absolute;left:2909.15px;top:1301.00px;font:400 24px/24px 'Liberation Sans', sans-serif;color:#737373;white-space:nowrap;letter-spacing:0.000px;transform-origin:119.77px 20px;transform:rotate(-27deg);">01/30/2024</div>
<div style="position:absolute;left:2999.23px;top:1301.00px;font:400 24px/24px 'Liberation Sans', sans-serif;color:#737373;white-space:nowrap;letter-spacing:0.000px;transform-origin:119.77px 20px;transform:rotate(-27deg);">01/31/2024</div>
<div style="position:absolute;left:180.00px;top:1436.00px;width:3024.00px;height:2.00px;background:#e5e7eb;"></div>
<div style="position:absolute;left:180.00px;top:1546.00px;width:3024.00px;height:2.00px;background:#e5e7eb;"></div>
<div style="position:absolute;left:180.00px;top:1634.00px;width:2994.00px;height:2.00px;background:#e5e7eb;"></div>
<div style="position:absolute;left:180.00px;top:1748.00px;width:2994.00px;height:2.00px;background:#ececef;"></div>
<div style="position:absolute;left:180.00px;top:1862.00px;width:2994.00px;height:2.00px;background:#ececef;"></div>
<div style="position:absolute;left:2664.00px;top:1454.00px;width:154.00px;height:76.00px;background:#f4f4f6;border-radius:14px;box-shadow:inset 0 0 0 1px #ededf0;"></div>
<div style="position:absolute;left:2670.00px;top:1462.00px;width:68.00px;height:60.00px;background:#fff;border-radius:10px;box-shadow:0 2px 4px rgba(0,0,0,0.08);"></div>
<div style="position:absolute;left:2691.60px;top:1480.70px;font:400 28px/28px 'Liberation Sans', sans-serif;-webkit-text-stroke:0.45px #18181b;color:#18181b;white-space:nowrap;letter-spacing:0.000px;">%</div>
<div style="position:absolute;left:2770.00px;top:1480.70px;font:400 28px/28px 'Liberation Sans', sans-serif;-webkit-text-stroke:0.45px #8a8a8f;color:#8a8a8f;white-space:nowrap;letter-spacing:0.000px;">$</div>
<div style="position:absolute;left:2835.00px;top:1454.00px;width:336.00px;height:76.00px;background:#f4f4f6;border-radius:14px;box-shadow:inset 0 0 0 1px #ededf0;"></div>
<div style="position:absolute;left:2840.00px;top:1460.00px;width:184.00px;height:64.00px;background:#fff;border-radius:10px;box-shadow:0 2px 4px rgba(0,0,0,0.08);"></div>
<div style="position:absolute;left:2857.00px;top:1478.75px;font:400 28px/28px 'Liberation Sans', sans-serif;-webkit-text-stroke:0.45px #18181b;color:#18181b;white-space:nowrap;letter-spacing:1.058px;">Cumulative</div>
<div style="position:absolute;left:3044.60px;top:1478.75px;font:400 28px/28px 'Liberation Sans', sans-serif;-webkit-text-stroke:0.45px #8a8a8f;color:#8a8a8f;white-space:nowrap;letter-spacing:0.762px;">By Date</div>
<div style="position:absolute;left:355.70px;top:1580.40px;font:400 24px/24px 'Liberation Sans', sans-serif;-webkit-text-stroke:0.9px #8e8e94;color:#8e8e94;white-space:nowrap;letter-spacing:1.237px;">Service</div>
<svg style="position:absolute;left:454.00px;top:1580.00px;overflow:visible;" width="34" height="24" viewBox="454 1580 34 24"><g stroke="#a1a1aa" stroke-width="2.6"><line x1="456" y1="1584" x2="483.5" y2="1584"/><line x1="456" y1="1592" x2="474" y2="1592"/><line x1="456" y1="1600" x2="465.6" y2="1600"/></g></svg>
<div style="position:absolute;left:1246.30px;top:1580.40px;font:400 24px/24px 'Liberation Sans', sans-serif;-webkit-text-stroke:0.9px #a332d4;color:#a332d4;white-space:nowrap;letter-spacing:1.245px;">Tag:environment</div>
<svg style="position:absolute;left:1452.00px;top:1576.00px;overflow:visible;" width="32" height="32" viewBox="1452 1576 32 32"><g fill="none" stroke="#a332d4" stroke-width="2.6"><line x1="1468.2" y1="1582" x2="1468.2" y2="1604"/><polyline points="1457.5,1591.5 1468.2,1581 1478.9,1591.5"/></g></svg>
<div style="position:absolute;left:1862.00px;top:1580.40px;font:400 24px/24px 'Liberation Sans', sans-serif;-webkit-text-stroke:0.9px #8e8e94;color:#8e8e94;white-space:nowrap;letter-spacing:1.182px;">Tag:team</div>
<svg style="position:absolute;left:1978.50px;top:1580.00px;overflow:visible;" width="34" height="24" viewBox="1978.5 1580 34 24"><g stroke="#a1a1aa" stroke-width="2.6"><line x1="1980.5" y1="1584" x2="2008.0" y2="1584"/><line x1="1980.5" y1="1592" x2="1998.5" y2="1592"/><line x1="1980.5" y1="1600" x2="1990.1" y2="1600"/></g></svg>
<div style="position:absolute;left:2208.00px;top:1580.40px;font:400 24px/24px 'Liberation Sans', sans-serif;-webkit-text-stroke:0.9px #8e8e94;color:#8e8e94;white-space:nowrap;letter-spacing:1.162px;">Accrued Costs</div>
<svg style="position:absolute;left:2388.00px;top:1580.00px;overflow:visible;" width="34" height="24" viewBox="2388 1580 34 24"><g stroke="#a1a1aa" stroke-width="2.6"><line x1="2390" y1="1584" x2="2417.5" y2="1584"/><line x1="2390" y1="1592" x2="2408" y2="1592"/><line x1="2390" y1="1600" x2="2399.6" y2="1600"/></g></svg>
<div style="position:absolute;left:2591.60px;top:1580.40px;font:400 24px/24px 'Liberation Sans', sans-serif;-webkit-text-stroke:0.9px #8e8e94;color:#8e8e94;white-space:nowrap;letter-spacing:0.848px;">Previous Period Costs</div>
<svg style="position:absolute;left:2858.00px;top:1580.00px;overflow:visible;" width="34" height="24" viewBox="2858 1580 34 24"><g stroke="#a1a1aa" stroke-width="2.6"><line x1="2860" y1="1584" x2="2887.5" y2="1584"/><line x1="2860" y1="1592" x2="2878" y2="1592"/><line x1="2860" y1="1600" x2="2869.6" y2="1600"/></g></svg>
<div style="position:absolute;left:3015.30px;top:1580.40px;font:400 24px/24px 'Liberation Sans', sans-serif;-webkit-text-stroke:0.9px #8e8e94;color:#8e8e94;white-space:nowrap;letter-spacing:1.295px;">Change</div>
<svg style="position:absolute;left:3116.40px;top:1580.00px;overflow:visible;" width="34" height="24" viewBox="3116.4 1580 34 24"><g stroke="#a1a1aa" stroke-width="2.6"><line x1="3118.4" y1="1584" x2="3145.9" y2="1584"/><line x1="3118.4" y1="1592" x2="3136.4" y2="1592"/><line x1="3118.4" y1="1600" x2="3128.0" y2="1600"/></g></svg>
<div style="position:absolute;left:213.00px;top:1661.00px;width:78.00px;height:62.00px;box-sizing:border-box;border:2px solid #e4e4e7;border-radius:9px;background:#fdfdfd;box-shadow:0 2px 2px rgba(24,24,27,0.06);"></div>
<svg style="position:absolute;left:232.00px;top:1669.00px;overflow:visible;" width="40" height="46" viewBox="232 1669 40 46"><g transform="translate(0 0)" fill="#52525b"><rect x="238.2" y="1676.3" width="3.6" height="27.4"/><rect x="238.2" y="1676.3" width="11.6" height="3.4"/><rect x="238.2" y="1700.1" width="27.7" height="3.6"/><rect x="262.3" y="1692" width="3.6" height="11.7"/><rect x="244.2" y="1688.2" width="3.6" height="9.6"/><rect x="250.2" y="1686.2" width="3.6" height="11.6"/><rect x="256.1" y="1692.2" width="3.6" height="5.6"/><rect x="254.6" y="1679.9" width="12.9" height="2.5" fill="#18181b"/><rect x="259.8" y="1674.6" width="2.5" height="12.9" fill="#18181b"/></g></svg>
<div style="position:absolute;left:357.00px;top:1681.00px;font:400 28px/28px 'Liberation Sans', sans-serif;color:#27272a;white-space:nowrap;letter-spacing:0.805px;">Amazon Elastic Compute Cloud - Compute</div>
<div style="position:absolute;left:1245.00px;top:1681.00px;font:400 28px/28px 'Liberation Sans', sans-serif;color:#27272a;white-space:nowrap;letter-spacing:1.424px;">production</div>
<div style="position:absolute;left:1861.00px;top:1681.00px;font:400 28px/28px 'Liberation Sans', sans-serif;color:#27272a;white-space:nowrap;letter-spacing:0.970px;">analytics</div>
<div style="position:absolute;left:2317.00px;top:1681.00px;font:400 28px/28px 'Liberation Sans', sans-serif;color:#27272a;white-space:nowrap;letter-spacing:2.326px;">$69.83</div>
<div style="position:absolute;left:2767.60px;top:1681.00px;font:400 28px/28px 'Liberation Sans', sans-serif;color:#27272a;white-space:nowrap;letter-spacing:2.293px;">$450.37</div>
<div style="position:absolute;left:3026.00px;top:1681.00px;font:400 28px/28px 'Liberation Sans', sans-serif;color:#27272a;white-space:nowrap;letter-spacing:1.735px;">-84.50%</div>
<div style="position:absolute;left:213.00px;top:1775.00px;width:78.00px;height:62.00px;box-sizing:border-box;border:2px solid #e4e4e7;border-radius:9px;background:#fdfdfd;box-shadow:0 2px 2px rgba(24,24,27,0.06);"></div>
<svg style="position:absolute;left:232.00px;top:1783.00px;overflow:visible;" width="40" height="46" viewBox="232 1783 40 46"><g transform="translate(0 114)" fill="#52525b"><rect x="238.2" y="1676.3" width="3.6" height="27.4"/><rect x="238.2" y="1676.3" width="11.6" height="3.4"/><rect x="238.2" y="1700.1" width="27.7" height="3.6"/><rect x="262.3" y="1692" width="3.6" height="11.7"/><rect x="244.2" y="1688.2" width="3.6" height="9.6"/><rect x="250.2" y="1686.2" width="3.6" height="11.6"/><rect x="256.1" y="1692.2" width="3.6" height="5.6"/><rect x="254.6" y="1679.9" width="12.9" height="2.5" fill="#18181b"/><rect x="259.8" y="1674.6" width="2.5" height="12.9" fill="#18181b"/></g></svg>
<div style="position:absolute;left:357.00px;top:1795.00px;font:400 28px/28px 'Liberation Sans', sans-serif;color:#27272a;white-space:nowrap;letter-spacing:0.805px;">Amazon Elastic Compute Cloud - Compute</div>
<div style="position:absolute;left:1245.00px;top:1795.00px;font:400 28px/28px 'Liberation Sans', sans-serif;color:#27272a;white-space:nowrap;letter-spacing:1.424px;">production</div>
<div style="position:absolute;left:1861.00px;top:1795.00px;font:400 28px/28px 'Liberation Sans', sans-serif;color:#27272a;white-space:nowrap;letter-spacing:1.201px;">core</div>
<div style="position:absolute;left:2273.50px;top:1795.00px;font:400 28px/28px 'Liberation Sans', sans-serif;color:#27272a;white-space:nowrap;letter-spacing:2.026px;">$2,607.39</div>
<div style="position:absolute;left:2742.70px;top:1795.00px;font:400 28px/28px 'Liberation Sans', sans-serif;color:#27272a;white-space:nowrap;letter-spacing:1.913px;">$2,351.80</div>
<div style="position:absolute;left:3021.70px;top:1795.00px;font:400 28px/28px 'Liberation Sans', sans-serif;color:#27272a;white-space:nowrap;letter-spacing:1.280px;">+10.87%</div>
<div style="position:absolute;left:213.00px;top:1889.00px;width:78.00px;height:61.00px;box-sizing:border-box;border:2px solid #e8e8ee;border-bottom:none;border-radius:9px 9px 0 0;background:#fdfdfd;"></div>
<svg style="position:absolute;left:232.00px;top:1897.00px;overflow:visible;" width="40" height="46" viewBox="232 1897 40 46"><g transform="translate(0 228)" fill="#52525b"><rect x="238.2" y="1676.3" width="3.6" height="27.4"/><rect x="238.2" y="1676.3" width="11.6" height="3.4"/><rect x="238.2" y="1700.1" width="27.7" height="3.6"/><rect x="262.3" y="1692" width="3.6" height="11.7"/><rect x="244.2" y="1688.2" width="3.6" height="9.6"/><rect x="250.2" y="1686.2" width="3.6" height="11.6"/><rect x="256.1" y="1692.2" width="3.6" height="5.6"/><rect x="254.6" y="1679.9" width="12.9" height="2.5" fill="#18181b"/><rect x="259.8" y="1674.6" width="2.5" height="12.9" fill="#18181b"/></g></svg>
<div style="position:absolute;left:357.00px;top:1909.00px;font:400 28px/28px 'Liberation Sans', sans-serif;color:#27272a;white-space:nowrap;letter-spacing:0.805px;">Amazon Elastic Compute Cloud - Compute</div>
<div style="position:absolute;left:1245.00px;top:1909.00px;font:400 28px/28px 'Liberation Sans', sans-serif;color:#27272a;white-space:nowrap;letter-spacing:1.424px;">production</div>
<div style="position:absolute;left:1861.00px;top:1909.00px;font:400 28px/28px 'Liberation Sans', sans-serif;color:#27272a;white-space:nowrap;letter-spacing:1.149px;">ingestion</div>
<div style="position:absolute;left:2273.50px;top:1909.00px;font:400 28px/28px 'Liberation Sans', sans-serif;color:#27272a;white-space:nowrap;letter-spacing:2.026px;">$2,388.70</div>
<div style="position:absolute;left:2742.70px;top:1909.00px;font:400 28px/28px 'Liberation Sans', sans-serif;color:#27272a;white-space:nowrap;letter-spacing:1.913px;">$2,006.76</div>
<div style="position:absolute;left:3021.70px;top:1909.00px;font:400 28px/28px 'Liberation Sans', sans-serif;color:#27272a;white-space:nowrap;letter-spacing:1.280px;">+19.03%</div>
<div style="position:absolute;left:3174.00px;top:1548.00px;width:30.00px;height:402.00px;background:#fafafa;border-left:2px solid #ececef;box-sizing:border-box;border-bottom-right-radius:16px;"></div>
<div style="position:absolute;left:3181.50px;top:1555.00px;width:17.00px;height:380.00px;background:#c4c4c4;border-radius:9px;"></div>
<div style="position:absolute;left:415.00px;top:488.00px;width:425.00px;height:772.00px;box-sizing:border-box;border:2px solid rgba(0,0,0,0.18);border-radius:9px;background:#fff;box-shadow:0 20px 40px -8px rgba(0,0,0,0.12), 0 8px 16px -6px rgba(0,0,0,0.08);"></div>
<div style="position:absolute;left:448.00px;top:522.00px;width:26.00px;height:26.00px;box-sizing:border-box;border:2px solid #52525b;border-radius:4px;background:#fff;"></div>
<div style="position:absolute;left:488.00px;top:523.20px;font:400 28px/28px 'Liberation Sans', sans-serif;-webkit-text-stroke:0.45px #3f3f46;color:#3f3f46;white-space:nowrap;letter-spacing:1.753px;">Ungrouped</div>
<div style="position:absolute;left:417.00px;top:579.50px;width:420.00px;height:2.00px;background:#e5e7eb;"></div>
<div style="position:absolute;left:448.00px;top:617.00px;font:700 28px/28px 'Liberation Sans', sans-serif;color:#687384;white-space:nowrap;letter-spacing:-0.004px;">Group By...</div>
<div style="position:absolute;left:448.00px;top:679.80px;width:26.00px;height:26.00px;box-sizing:border-box;border:2px solid #d8d8dc;border-radius:4px;background:#f6f6f7;"></div>
<div style="position:absolute;left:491.20px;top:681.00px;font:400 28px/28px 'Liberation Sans', sans-serif;-webkit-text-stroke:0.45px #27272a;color:#27272a;white-space:nowrap;letter-spacing:1.418px;">Account</div>
<div style="position:absolute;left:448.00px;top:737.82px;width:26.00px;height:26.00px;box-sizing:border-box;border:2px solid #d8d8dc;border-radius:4px;background:#f6f6f7;"></div>
<div style="position:absolute;left:489.20px;top:739.02px;font:400 28px/28px 'Liberation Sans', sans-serif;-webkit-text-stroke:0.45px #27272a;color:#27272a;white-space:nowrap;letter-spacing:1.066px;">Billing Account</div>
<div style="position:absolute;left:448.00px;top:795.84px;width:26.00px;height:26.00px;box-sizing:border-box;border:2px solid #d8d8dc;border-radius:4px;background:#f6f6f7;"></div>
<div style="position:absolute;left:489.20px;top:797.04px;font:400 28px/28px 'Liberation Sans', sans-serif;-webkit-text-stroke:0.45px #27272a;color:#27272a;white-space:nowrap;letter-spacing:0.988px;">Region</div>
<svg style="position:absolute;left:448.00px;top:853.86px;overflow:visible;" width="26" height="26" viewBox="448 853.8599999999999 26 26"><rect x="448" y="853.8599999999999" width="26" height="26" rx="3" fill="#0b6cff"/><polyline points="454,867.3599999999999 458.8,872.3599999999999 468,861.3599999999999" fill="none" stroke="#fff" stroke-width="3.4"/></svg>
<div style="position:absolute;left:490.20px;top:855.06px;font:400 28px/28px 'Liberation Sans', sans-serif;-webkit-text-stroke:0.45px #27272a;color:#27272a;white-space:nowrap;letter-spacing:1.201px;">Service</div>
<div style="position:absolute;left:448.00px;top:911.88px;width:26.00px;height:26.00px;box-sizing:border-box;border:2px solid #d8d8dc;border-radius:4px;background:#f6f6f7;"></div>
<div style="position:absolute;left:489.20px;top:913.08px;font:400 28px/28px 'Liberation Sans', sans-serif;-webkit-text-stroke:0.45px #27272a;color:#27272a;white-space:nowrap;letter-spacing:0.820px;">Resource</div>
<div style="position:absolute;left:448.00px;top:969.90px;width:26.00px;height:26.00px;box-sizing:border-box;border:2px solid #d8d8dc;border-radius:4px;background:#f6f6f7;"></div>
<div style="position:absolute;left:489.20px;top:971.10px;font:400 28px/28px 'Liberation Sans', sans-serif;-webkit-text-stroke:0.45px #27272a;color:#27272a;white-space:nowrap;letter-spacing:1.138px;">Provider</div>
<div style="position:absolute;left:448.00px;top:1027.92px;width:26.00px;height:26.00px;box-sizing:border-box;border:2px solid #d8d8dc;border-radius:4px;background:#f6f6f7;"></div>
<div style="position:absolute;left:490.20px;top:1029.12px;font:400 28px/28px 'Liberation Sans', sans-serif;-webkit-text-stroke:0.45px #27272a;color:#27272a;white-space:nowrap;letter-spacing:1.398px;">Category</div>
<div style="position:absolute;left:448.00px;top:1085.94px;width:26.00px;height:26.00px;box-sizing:border-box;border:2px solid #d8d8dc;border-radius:4px;background:#f6f6f7;"></div>
<div style="position:absolute;left:490.20px;top:1087.14px;font:400 28px/28px 'Liberation Sans', sans-serif;-webkit-text-stroke:0.45px #27272a;color:#27272a;white-space:nowrap;letter-spacing:1.339px;">Subcategory</div>
<div style="position:absolute;left:448.00px;top:1143.96px;width:26.00px;height:26.00px;box-sizing:border-box;border:2px solid #d8d8dc;border-radius:4px;background:#f6f6f7;"></div>
<div style="position:absolute;left:490.20px;top:1145.16px;font:400 28px/28px 'Liberation Sans', sans-serif;-webkit-text-stroke:0.45px #27272a;color:#27272a;white-space:nowrap;letter-spacing:0.986px;">Charge Type</div>
<svg style="position:absolute;left:448.00px;top:1201.98px;overflow:visible;" width="26" height="26" viewBox="448 1201.98 26 26"><rect x="448" y="1201.98" width="26" height="26" rx="3" fill="#0b6cff"/><polyline points="454,1215.48 458.8,1220.48 468,1209.48" fill="none" stroke="#fff" stroke-width="3.4"/></svg>
<div style="position:absolute;left:491.20px;top:1203.18px;font:400 28px/28px 'Liberation Sans', sans-serif;-webkit-text-stroke:0.45px #27272a;color:#27272a;white-space:nowrap;letter-spacing:1.414px;">Tag</div>
<svg style="position:absolute;left:800.00px;top:1200.00px;overflow:visible;" width="24" height="28" viewBox="800 1200 24 28"><polyline points="806,1207.5 812.5,1214 806,1220.5" fill="none" stroke="#27272a" stroke-width="2.4"/></svg>
<div style="position:absolute;left:838.00px;top:1151.00px;width:391.00px;height:475.00px;box-sizing:border-box;border:2px solid rgba(0,0,0,0.18);border-radius:9px;background:#fff;box-shadow:0 20px 40px -8px rgba(0,0,0,0.12), -4px 8px 16px -6px rgba(0,0,0,0.08);"></div>
<div style="position:absolute;left:862.70px;top:1185.00px;font:400 28px/28px 'Liberation Sans', sans-serif;color:#8e8e93;white-space:nowrap;letter-spacing:0.600px;">Filter...</div>
<div style="position:absolute;left:841.00px;top:1242.00px;width:386.00px;height:2.00px;background:#e5e7eb;"></div>
<div style="position:absolute;left:872.00px;top:1276.00px;width:26.00px;height:26.00px;box-sizing:border-box;border:2px solid #d8d8dc;border-radius:4px;background:#f6f6f7;"></div>
<div style="position:absolute;left:913.30px;top:1277.30px;font:400 28px/28px 'Liberation Sans', sans-serif;-webkit-text-stroke:0.45px #27272a;color:#27272a;white-space:nowrap;letter-spacing:1.428px;">app</div>
<div style="position:absolute;left:872.00px;top:1334.00px;width:26.00px;height:26.00px;box-sizing:border-box;border:2px solid #d8d8dc;border-radius:4px;background:#f6f6f7;"></div>
<div style="position:absolute;left:913.30px;top:1335.30px;font:400 28px/28px 'Liberation Sans', sans-serif;-webkit-text-stroke:0.45px #27272a;color:#27272a;white-space:nowrap;letter-spacing:1.420px;">application</div>
<div style="position:absolute;left:872.00px;top:1392.00px;width:26.00px;height:26.00px;box-sizing:border-box;border:2px solid #d8d8dc;border-radius:4px;background:#f6f6f7;"></div>
<div style="position:absolute;left:913.30px;top:1393.30px;font:400 28px/28px 'Liberation Sans', sans-serif;-webkit-text-stroke:0.45px #27272a;color:#27272a;white-space:nowrap;letter-spacing:1.392px;">container</div>
<svg style="position:absolute;left:872.00px;top:1450.00px;overflow:visible;" width="26" height="26" viewBox="872 1450 26 26"><rect x="872" y="1450" width="26" height="26" rx="3" fill="#0b6cff"/><polyline points="878,1463.5 882.8,1468.5 892,1457.5" fill="none" stroke="#fff" stroke-width="3.4"/></svg>
<div style="position:absolute;left:913.30px;top:1451.30px;font:400 28px/28px 'Liberation Sans', sans-serif;-webkit-text-stroke:0.45px #27272a;color:#27272a;white-space:nowrap;letter-spacing:1.210px;">environment</div>
<div style="position:absolute;left:872.00px;top:1508.00px;width:26.00px;height:26.00px;box-sizing:border-box;border:2px solid #d8d8dc;border-radius:4px;background:#f6f6f7;"></div>
<div style="position:absolute;left:913.30px;top:1509.30px;font:400 28px/28px 'Liberation Sans', sans-serif;-webkit-text-stroke:0.45px #27272a;color:#27272a;white-space:nowrap;letter-spacing:1.202px;">namespace</div>
<svg style="position:absolute;left:872.00px;top:1566.00px;overflow:visible;" width="26" height="26" viewBox="872 1566 26 26"><rect x="872" y="1566" width="26" height="26" rx="3" fill="#0b6cff"/><polyline points="878,1579.5 882.8,1584.5 892,1573.5" fill="none" stroke="#fff" stroke-width="3.4"/></svg>
<div style="position:absolute;left:914.30px;top:1567.30px;font:400 28px/28px 'Liberation Sans', sans-serif;-webkit-text-stroke:0.45px #27272a;color:#27272a;white-space:nowrap;letter-spacing:1.525px;">team</div>
<script>(function(){var w=window.innerWidth;if(w&&Math.abs(w-3384)>4){document.documentElement.style.zoom=String(w/3384);}})();</script>
</body></html>
